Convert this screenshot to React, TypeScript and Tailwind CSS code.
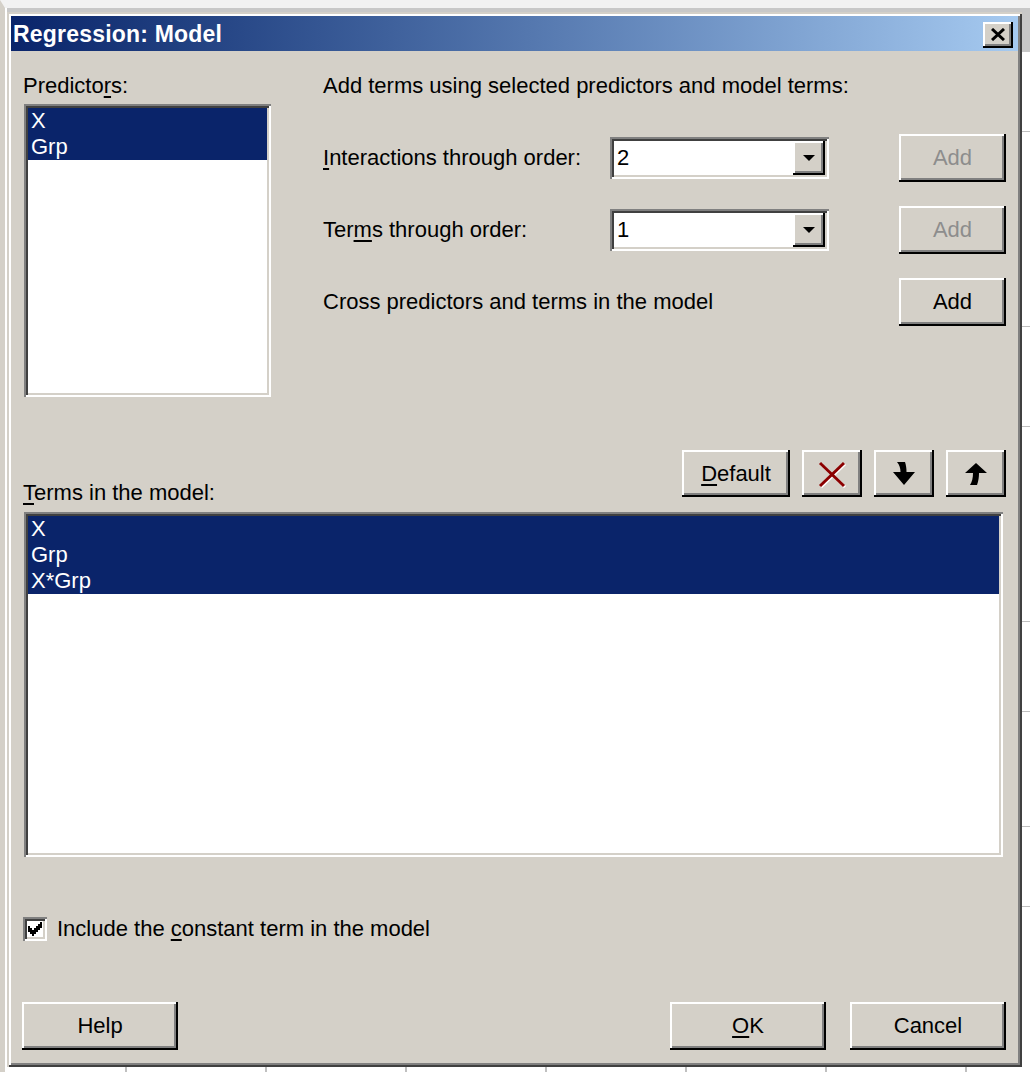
import React from 'react';

// classic 3D bevels
const raised =
  'bg-[#d4d0c8] shadow-[inset_-2px_-2px_0_0_#000000,inset_2px_2px_0_0_#ffffff,inset_-4px_-4px_0_0_#808080]';
const sunken =
  'bg-white shadow-[inset_2px_2px_0_0_#808080,inset_-2px_-2px_0_0_#ffffff,inset_4px_4px_0_0_#404040,inset_-4px_-4px_0_0_#d4d0c8]';

type BtnProps = { className?: string; children?: React.ReactNode; disabled?: boolean };

const Button: React.FC<BtnProps> = ({ className = '', children, disabled }) => (
  <div
    className={`${raised} flex items-center justify-center text-[22px] leading-[24px] ${
      disabled ? 'text-[#8d8d8d]' : 'text-black'
    } ${className}`}
  >
    {children}
  </div>
);

const Combo: React.FC<{ value: string }> = ({ value }) => (
  <div className={`${sunken} w-[219px] h-[42px] flex items-center p-[4px]`}>
    <span className="flex-1 pl-[3px] text-[22px] leading-[24px] text-black">{value}</span>
    <div className={`${raised} w-[32px] h-[34px] flex items-center justify-center`}>
      <svg width="12" height="6" viewBox="0 0 12 6">
        <polygon points="0,0 12,0 6,6" fill="#000" />
      </svg>
    </div>
  </div>
);

const CheckMark = () => (
  <svg width="14" height="14" viewBox="0 0 7 7" shapeRendering="crispEdges">
    <path
      fill="#000"
      d="M6 0h1v1h-1z M5 1h2v1h-2z M0 2h1v1h-1z M4 2h3v1h-3z M0 3h2v1h-2z M3 3h3v1h-3z M0 4h5v1h-5z M1 5h3v1h-3z M2 6h1v1h-1z"
    />
  </svg>
);

const DownArrow = () => (
  <svg width="24" height="24" viewBox="0 0 24 24">
    <path fill="#000" d="M5 0 L13 0 C14 3 14.5 6 14.5 10 L23 10 L12 23 L1 10 L8.5 10 C8.5 6 7.5 3 5 0 Z" />
  </svg>
);

const UpArrow = () => (
  <svg width="24" height="22" viewBox="0 0 24 22">
    <path fill="#000" d="M12 0 L23 10 L15 10 C15 14 14.5 18 13 22 L6 22 C8 19 9 15 9 10 L1 10 Z" />
  </svg>
);

const RedX = () => (
  <svg width="30" height="28" viewBox="0 0 30 28">
    <line x1="3" y1="3" x2="27" y2="26" stroke="#ffffff" strokeWidth="3" transform="translate(1,1)" />
    <line x1="27" y1="3" x2="3" y2="26" stroke="#ffffff" strokeWidth="3" transform="translate(1,1)" />
    <line x1="3" y1="3" x2="27" y2="26" stroke="#8b0000" strokeWidth="3" />
    <line x1="27" y1="3" x2="3" y2="26" stroke="#8b0000" strokeWidth="3" />
  </svg>
);

const Label: React.FC<{ children: React.ReactNode; className?: string }> = ({ children, className = '' }) => (
  <div className={`text-[22px] leading-[24px] text-black whitespace-nowrap ${className}`}>{children}</div>
);

const Row: React.FC<{ text: string }> = ({ text }) => (
  <div className="h-[26px] bg-[#0a246a] text-white text-[22px] leading-[26px] pl-[3px]">{text}</div>
);

export default function App() {
  const gridCells = [0, 1, 2, 3, 4, 5, 6];

  return (
    <div
      className="w-[1030px] h-[1072px] overflow-hidden bg-white border-t-[8px] border-t-[#f2f2f2] border-l-[5px] border-l-[#d4d0c8] font-['Liberation_Sans',Arial,sans-serif]"
    >
      <div className="h-[4px] bg-[#c8c8c8] border-l-2 border-white" />
      <div className="flex">
        <div className="w-[2px] h-[1055px] bg-white" />
        {/* dialog window */}
        <div className="w-[1015px] h-[1055px] bg-[#d4d0c8] p-[4px] flex flex-col shadow-[inset_2px_2px_0_0_#d4d0c8,inset_-2px_-2px_0_0_#404040,inset_4px_4px_0_0_#ffffff,inset_-4px_-4px_0_0_#808080]">
          {/* title bar */}
          <div className="h-[35px] bg-linear-to-r from-[#0a246a] to-[#a6caf0] flex items-center justify-between pl-[2px]">
            <span className="text-white font-bold text-[23px] leading-[26px] tracking-[0.2px]">Regression: Model</span>
            <div className={`${raised} w-[30px] h-[26px] mr-[5px] mt-[2px] flex items-center justify-center`}>
              <svg width="14" height="13" viewBox="0 0 14 13">
                <path d="M1 1 L13 12 M13 1 L1 12" stroke="#000" strokeWidth="3" />
              </svg>
            </div>
          </div>

          {/* body */}
          <div className="flex-1 px-[12px] pt-[23px] flex flex-col">
            {/* top section */}
            <div className="flex">
              <div className="w-[248px] flex flex-col">
                <Label>
                  Predicto<span className="underline underline-offset-[3px]">r</span>s:
                </Label>
                <div className={`${sunken} ml-[1px] mt-[6px] w-[247px] h-[293px] p-[4px]`}>
                  <Row text="X" />
                  <Row text="Grp" />
                </div>
              </div>

              <div className="ml-[52px] flex-1 flex flex-col">
                <Label>Add terms using selected predictors and model terms:</Label>

                <div className="mt-[36px] h-[48px] flex items-center">
                  <Label className="w-[287px]">
                    <span className="underline underline-offset-[3px]">I</span>nteractions through order:
                  </Label>
                  <Combo value="2" />
                  <Button disabled className="ml-auto w-[107px] h-[48px]">
                    Add
                  </Button>
                </div>

                <div className="mt-[24px] h-[48px] flex items-center">
                  <Label className="w-[287px]">
                    Ter<span className="underline underline-offset-[3px]">m</span>s through order:
                  </Label>
                  <Combo value="1" />
                  <Button disabled className="ml-auto w-[107px] h-[48px]">
                    Add
                  </Button>
                </div>

                <div className="mt-[24px] h-[48px] flex items-center">
                  <Label>Cross predictors and terms in the model</Label>
                  <Button className="ml-auto w-[107px] h-[48px]">Add</Button>
                </div>
              </div>
            </div>

            {/* terms header */}
            <div className="mt-[53px] flex justify-between items-start">
              <Label className="mt-[31px]">
                <span className="underline underline-offset-[3px]">T</span>erms in the model:
              </Label>
              <div className="flex gap-[12px]">
                <Button className="w-[108px] h-[47px]">
                  <span className="underline underline-offset-[3px]">D</span>efault
                </Button>
                <Button className="w-[60px] h-[47px]">
                  <RedX />
                </Button>
                <Button className="w-[60px] h-[47px]">
                  <DownArrow />
                </Button>
                <Button className="w-[60px] h-[47px]">
                  <UpArrow />
                </Button>
              </div>
            </div>

            <div className={`${sunken} mt-[7px] ml-[1px] w-[979px] h-[345px] p-[4px]`}>
              <Row text="X" />
              <Row text="Grp" />
              <Row text="X*Grp" />
            </div>

            {/* constant term */}
            <div className="mt-[60px] flex items-center">
              <div className={`${sunken} w-[24px] h-[24px] flex items-center justify-center`}>
                <CheckMark />
              </div>
              <Label className="ml-[10px]">
                Include the <span className="underline underline-offset-[3px]">c</span>onstant term in the model
              </Label>
            </div>

            {/* bottom buttons */}
            <div className="mt-[61px] flex items-center">
              <Button className="-ml-[1px] w-[156px] h-[48px]">Help</Button>
              <Button className="ml-auto w-[156px] h-[48px]">
                <span className="underline underline-offset-[3px]">O</span>K
              </Button>
              <Button className="ml-[24px] w-[156px] h-[48px]">Cancel</Button>
            </div>
          </div>
        </div>
        <div className="flex-1 flex flex-col">
          <div className="h-[40px] bg-[#c8c8c8]" />
          <div className="h-[80px] border-b border-[#c0c0c0]" />
          <div className="h-[195px] border-b border-[#c0c0c0]" />
          <div className="h-[100px] border-b border-[#c0c0c0]" />
          <div className="h-[195px] border-b border-[#c0c0c0]" />
          <div className="h-[90px] border-b border-[#c0c0c0]" />
          <div className="h-[115px] border-b border-[#c0c0c0]" />
          <div className="h-[80px] border-b border-[#c0c0c0]" />
        </div>
      </div>
      <div className="flex h-[5px]">
        <div className="w-[120px] shrink-0" />
        {gridCells.map((i) => (
          <div key={i} className="w-[140px] shrink-0 border-l-2 border-[#c0c0c0]" />
        ))}
      </div>
    </div>
  );
}
